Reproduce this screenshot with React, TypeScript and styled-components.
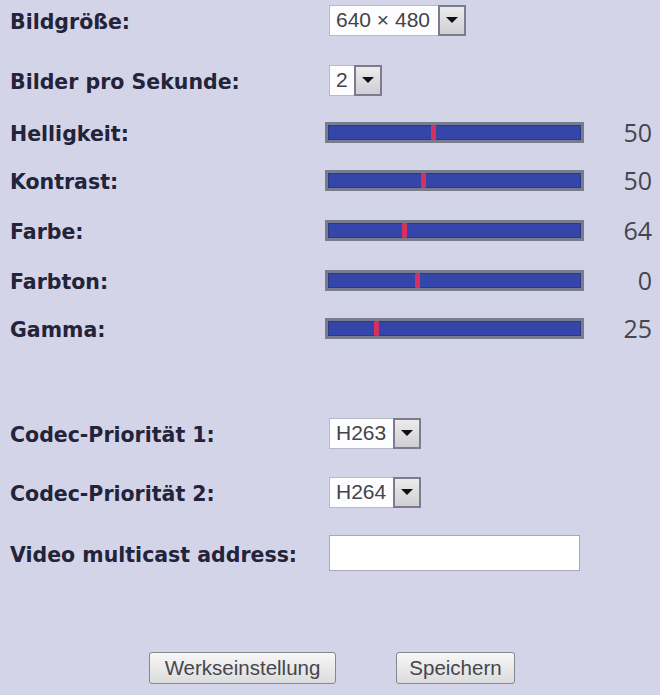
import React from "react";
import styled, { createGlobalStyle } from "styled-components";

const Global = createGlobalStyle`
  html, body { margin: 0; padding: 0; background: #d4d4e9; }
  body { width: 660px; height: 695px; overflow: hidden; }
`;

const Page = styled.div`
  width: 660px;
  height: 695px;
  background: #d4d4e9;
  display: flex;
  flex-direction: column;
`;

const Row = styled.div<{ $mt: number }>`
  display: grid;
  grid-template-columns: 319px 266px 1fr;
  align-items: center;
  height: 40px;
  margin-top: ${(p) => p.$mt}px;
`;

const Label = styled.div`
  padding-left: 10px;
  padding-top: 3px;
  font-family: "DejaVu Sans", Verdana, sans-serif;
  font-weight: bold;
  font-size: 20.5px;
  color: #23233a;
  white-space: nowrap;
`;

const Control = styled.div`
  display: flex;
  align-items: center;
`;

const Value = styled.div`
  text-align: right;
  padding-right: 8px;
  font-family: "Open Sans", "Liberation Sans", sans-serif;
  font-size: 25px;
  color: #45454f;
`;

const SelectWrap = styled.div`
  display: inline-flex;
  height: 31px;
  margin-left: 10px;
`;

const SelectText = styled.div<{ $w: number }>`
  width: ${(p) => p.$w}px;
  box-sizing: border-box;
  background: #fdfdff;
  border: 1px solid #b9b9c9;
  border-right: none;
  padding-left: 6px;
  display: flex;
  align-items: center;
  font-family: "Liberation Sans", Arial, sans-serif;
  font-size: 21px;
  color: #444448;
  white-space: nowrap;
`;

const ArrowBtn = styled.div`
  width: 28px;
  box-sizing: border-box;
  border: 2px solid #7c7c8e;
  background: linear-gradient(#ececec, #cfcfd3);
  display: flex;
  align-items: center;
  justify-content: center;
`;

const Triangle = styled.div`
  width: 0;
  height: 0;
  border-left: 6px solid transparent;
  border-right: 6px solid transparent;
  border-top: 6px solid #111;
`;

const Track = styled.div`
  position: relative;
  width: 259px;
  height: 21px;
  margin-left: 6px;
  box-sizing: border-box;
  border: 3px solid #777d8e;
  background: #3446aa;
  box-shadow: inset 0 0 0 1px #2a3a86;
`;

const Thumb = styled.div`
  position: absolute;
  top: 0px;
  width: 5px;
  height: 15px;
  margin-left: -2px;
  background: #d6305e;
  border-radius: 1px;
`;

const TextInput = styled.input`
  width: 251px;
  height: 36px;
  margin-left: 10px;
  box-sizing: border-box;
  border: 1px solid #a9a9bb;
  background: #ffffff;
  outline: none;
`;

const ButtonRow = styled.div`
  display: flex;
  justify-content: center;
  gap: 60px;
  margin-top: 79px;
  padding-left: 4px;
`;

const Button = styled.button<{ $w: number }>`
  width: ${(p) => p.$w}px;
  height: 32px;
  border: 1px solid #86868f;
  border-radius: 3px;
  background: linear-gradient(#f7f7f7, #dcdcde);
  font-family: "Liberation Sans", Arial, sans-serif;
  font-size: 20.5px;
  color: #46464c;
  padding: 0;
`;

function Select({ value, w }: { value: string; w: number }) {
  return (
    <SelectWrap>
      <SelectText $w={w}>{value}</SelectText>
      <ArrowBtn>
        <Triangle />
      </ArrowBtn>
    </SelectWrap>
  );
}

const sliders = [
  { label: "Helligkeit:", value: "50", pos: 108, mt: 12 },
  { label: "Kontrast:", value: "50", pos: 98, mt: 8 },
  { label: "Farbe:", value: "64", pos: 79, mt: 10 },
  { label: "Farbton:", value: "0", pos: 92, mt: 10 },
  { label: "Gamma:", value: "25", pos: 51, mt: 8 },
];

export default function App() {
  return (
    <Page>
      <Global />
      <Row $mt={0}>
        <Label>Bildgröße:</Label>
        <Control>
          <Select value="640 × 480" w={109} />
        </Control>
        <div />
      </Row>
      <Row $mt={20}>
        <Label>Bilder pro Sekunde:</Label>
        <Control>
          <Select value="2" w={25} />
        </Control>
        <div />
      </Row>
      {sliders.map((s) => (
        <Row key={s.label} $mt={s.mt}>
          <Label>{s.label}</Label>
          <Control>
            <Track>
              <Thumb style={{ left: s.pos - 3 }} />
            </Track>
          </Control>
          <Value>{s.value}</Value>
        </Row>
      ))}
      <Row $mt={65}>
        <Label>Codec-Priorität 1:</Label>
        <Control>
          <Select value="H263" w={64} />
        </Control>
        <div />
      </Row>
      <Row $mt={19}>
        <Label>Codec-Priorität 2:</Label>
        <Control>
          <Select value="H264" w={64} />
        </Control>
        <div />
      </Row>
      <Row $mt={21}>
        <Label>Video multicast address:</Label>
        <Control>
          <TextInput type="text" />
        </Control>
        <div />
      </Row>
      <ButtonRow>
        <Button $w={187}>Werkseinstellung</Button>
        <Button $w={119}>Speichern</Button>
      </ButtonRow>
    </Page>
  );
}
